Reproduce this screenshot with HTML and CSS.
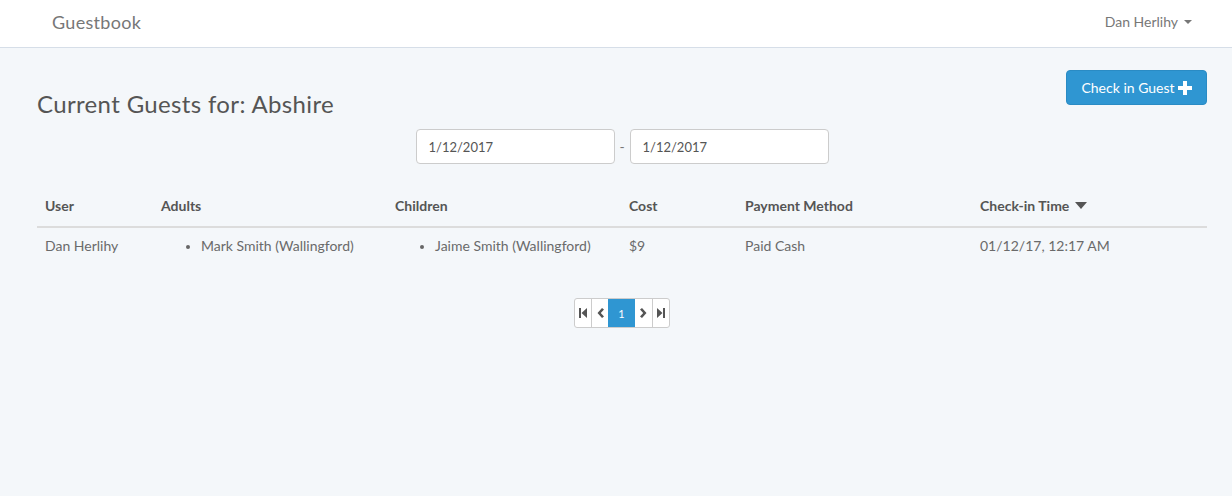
FILE: index.html
```html
<!DOCTYPE html>
<html>
<head>
<meta charset="utf-8">
<link rel="stylesheet" href="styles.css">
</head>
<body>
<nav class="navbar">
  <a class="brand">Guestbook</a>
  <a class="user">Dan Herlihy <span class="caret"></span></a>
</nav>
<main class="page">
  <div class="top">
    <h3 class="title">Current Guests for: Abshire</h3>
    <button class="btn-primary">Check in Guest <svg class="plus" viewBox="0 0 14 14" width="14" height="14"><path d="M5 0h4v5h5v4H9v5H5V9H0V5h5z" fill="#fff"/></svg></button>
  </div>
  <div class="dates">
    <input class="date" value="1/12/2017">
    <span class="dash">-</span>
    <input class="date" value="1/12/2017">
  </div>
  <table class="grid">
    <thead>
      <tr>
        <th class="c1">User</th>
        <th class="c2">Adults</th>
        <th class="c3">Children</th>
        <th class="c4">Cost</th>
        <th class="c5">Payment Method</th>
        <th class="c6">Check-in Time <svg class="sort" viewBox="0 0 12 7" width="12" height="7"><path d="M0 0h12L6 7z" fill="#555"/></svg></th>
      </tr>
    </thead>
    <tbody>
      <tr>
        <td>Dan Herlihy</td>
        <td><ul><li>Mark Smith (Wallingford)</li></ul></td>
        <td><ul><li>Jaime Smith (Wallingford)</li></ul></td>
        <td>$9</td>
        <td>Paid Cash</td>
        <td>01/12/17, 12:17 AM</td>
      </tr>
    </tbody>
  </table>
  <div class="pager-wrap">
    <ul class="pager">
      <li><svg viewBox="0 0 8 10" width="8" height="10"><path d="M0 0h2v10H0zM8 0v10L2.5 5z" fill="#555"/></svg></li>
      <li><svg viewBox="0 0 7 10" width="7" height="10"><path d="M5 0l2 1.5L3.8 5 7 8.5 5 10 0.5 5z" fill="#555"/></svg></li>
      <li class="active">1</li>
      <li><svg viewBox="0 0 7 10" width="7" height="10"><path d="M2 0L0 1.5 3.2 5 0 8.5 2 10l4.5-5z" fill="#555"/></svg></li>
      <li><svg viewBox="0 0 8 10" width="8" height="10"><path d="M6 0h2v10H6zM0 0v10l5.5-5z" fill="#555"/></svg></li>
    </ul>
  </div>
</main>
</body>
</html>
```

FILE: styles.css
```css
* { box-sizing: border-box; }
html, body { margin: 0; padding: 0; }
body {
  background: #f4f7fa;
  font-family: Lato, "Open Sans", sans-serif;
  font-size: 14px;
  color: #555;
  width: 1232px;
  height: 496px;
  overflow: hidden;
}
.navbar {
  height: 48px;
  background: #fff;
  border-bottom: 1px solid #d6dee8;
  display: flex;
  align-items: center;
  justify-content: space-between;
  padding: 0 40px 0 52px;
}
.brand {
  font-size: 18px;
  color: #777;
  margin-top: -4px;
  letter-spacing: 0.3px;
}
.user {
  font-size: 14px;
  color: #777;
  display: flex;
  align-items: center;
  margin-top: -4px;
}
.caret {
  display: inline-block;
  width: 0; height: 0;
  margin-left: 6px;
  border-top: 4px solid #777;
  border-left: 4px solid transparent;
  border-right: 4px solid transparent;
}
.page {
  padding: 22px 25px 0 37px;
}
.top {
  display: flex;
  justify-content: space-between;
  align-items: flex-start;
}
.title {
  margin: 21px 0 0 0;
  font-size: 24px;
  font-weight: 400;
  line-height: 26px;
  color: #555;
  letter-spacing: 0.35px;
}
.btn-primary {
  height: 35px;
  width: 141px;
  background: #2f96d2;
  border: 1px solid #2a8bc4;
  border-radius: 4px;
  color: #fff;
  font-family: inherit;
  font-size: 14px;
  display: flex;
  align-items: center;
  justify-content: center;
  gap: 3px;
  padding: 0;
}
.plus { display: block; }
.dates {
  display: flex;
  justify-content: center;
  align-items: center;
  margin-top: 12px;
  gap: 0;
}
.date {
  width: 199px;
  height: 35px;
  border: 1px solid #ccc;
  border-radius: 4px;
  background: #fff;
  font-family: inherit;
  font-size: 13px;
  color: #555;
  padding: 0 12px;
  outline: none;
}
.dash {
  width: 15px;
  text-align: center;
  color: #777;
}
.grid {
  width: 1170px;
  margin-top: 24px;
  border-collapse: collapse;
  table-layout: fixed;
}
.grid th {
  text-align: left;
  font-weight: 700;
  color: #555;
  padding: 8px 8px 10px 8px;
  border-bottom: 2px solid #dcdcdc;
  line-height: 20px;
}
.grid td {
  padding: 8px 8px 9px 8px;
  line-height: 20px;
  color: #6a6a6a;
  vertical-align: top;
}
.c1 { width: 116px; }
.c2 { width: 234px; }
.c3 { width: 234px; }
.c4 { width: 116px; }
.c5 { width: 235px; }
.c6 { width: 235px; }
.sort { margin-left: 2px; vertical-align: 2px; }
.grid ul {
  margin: 0;
  padding-left: 40px;
}
.grid li::marker { font-size: 12px; color: #666; }
.pager-wrap {
  display: flex;
  justify-content: center;
  margin-top: 33px;
}
.pager {
  display: flex;
  list-style: none;
  margin: 0;
  padding: 0;
  border: 1px solid #ccc;
  border-radius: 3px;
  background: #fff;
  height: 30px;
  overflow: hidden;
}
.pager li {
  width: 17px;
  display: flex;
  align-items: center;
  justify-content: center;
  border-left: 1px solid #ccc;
  font-size: 11px;
}
.pager li:first-child { border-left: none; width: 16px; }
.pager li.active {
  width: 27px;
  background: #2f96d2;
  color: #fff;
  border-left: none;
}
.pager li.active + li { border-left: none; }
```
